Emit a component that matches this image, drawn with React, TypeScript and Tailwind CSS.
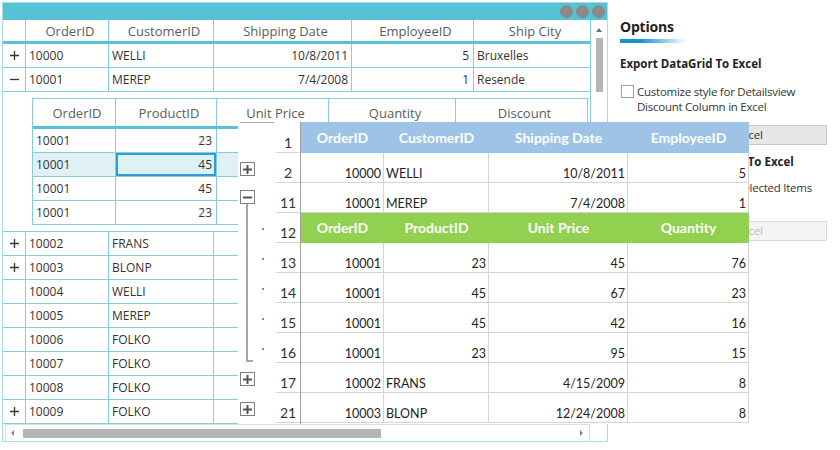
import React from "react";

const LINE = "border-[#84cfdc]";
const XLINE = "border-[#d4d4d4]";

function PlusIcon({ s = 9, w = 1.3, c = "#333" }: { s?: number; w?: number; c?: string }) {
  return (
    <svg width={s} height={s} viewBox={`0 0 ${s} ${s}`}>
      <path d={`M0 ${s / 2}H${s}M${s / 2} 0V${s}`} stroke={c} strokeWidth={w} fill="none" />
    </svg>
  );
}
function MinusIcon({ s = 9, w = 1.3, c = "#333" }: { s?: number; w?: number; c?: string }) {
  return (
    <svg width={s} height={s} viewBox={`0 0 ${s} ${s}`}>
      <path d={`M0 ${s / 2}H${s}`} stroke={c} strokeWidth={w} fill="none" />
    </svg>
  );
}

type Row = { exp?: "+" | "-"; id: string; cust: string; date: string; emp: string; city: string };

function MainRow({ r }: { r: Row }) {
  return (
    <div className={`flex h-[24px] shrink-0 border-b ${LINE} text-[12px] leading-[16px]`}>
      <div className={`w-[23px] border-r ${LINE} flex items-center justify-center`}>
        {r.exp === "+" ? <PlusIcon /> : r.exp === "-" ? <MinusIcon /> : null}
      </div>
      <div className={`w-[83px] border-r ${LINE} flex items-center pl-[3px]`}>{r.id}</div>
      <div className={`w-[105px] border-r ${LINE} flex items-center pl-[3px]`}>{r.cust}</div>
      <div className={`w-[138px] border-r ${LINE} flex items-center justify-end pr-[3px]`}>{r.date}</div>
      <div className={`w-[122px] border-r ${LINE} flex items-center justify-end pr-[4px]`}>{r.emp}</div>
      <div className="w-[116px] flex items-center pl-[3px]">{r.city}</div>
    </div>
  );
}

const topRows: Row[] = [
  { exp: "+", id: "10000", cust: "WELLI", date: "10/8/2011", emp: "5", city: "Bruxelles" },
  { exp: "-", id: "10001", cust: "MEREP", date: "7/4/2008", emp: "1", city: "Resende" },
];
const bottomRows: Row[] = [
  { exp: "+", id: "10002", cust: "FRANS", date: "", emp: "", city: "" },
  { exp: "+", id: "10003", cust: "BLONP", date: "", emp: "", city: "" },
  { id: "10004", cust: "WELLI", date: "", emp: "", city: "" },
  { id: "10005", cust: "MEREP", date: "", emp: "", city: "" },
  { id: "10006", cust: "FOLKO", date: "", emp: "", city: "" },
  { id: "10007", cust: "FOLKO", date: "", emp: "", city: "" },
  { id: "10008", cust: "FOLKO", date: "", emp: "", city: "" },
  { exp: "+", id: "10009", cust: "FOLKO", date: "", emp: "", city: "" },
];

const detailRows = [
  { id: "10001", p: "23" },
  { id: "10001", p: "45" },
  { id: "10001", p: "45" },
  { id: "10001", p: "23" },
];

function DetailGrid() {
  return (
    <div className={`w-[556px] border ${LINE} flex flex-col`}>
      <div className="flex h-[30px] shrink-0 border-b-[3px] border-[#56c2d6] text-[13px] text-[#5c5c5c]">
        <div className={`w-[83px] border-r ${LINE} flex items-center justify-center pl-[6px] pt-[2px]`}>OrderID</div>
        <div className={`w-[101px] border-r ${LINE} flex items-center justify-center pl-[6px] pt-[2px]`}>ProductID</div>
        <div className={`w-[112px] border-r ${LINE} flex items-center justify-center pl-[6px] pt-[2px]`}>Unit Price</div>
        <div className={`w-[127px] border-r ${LINE} flex items-center justify-center pl-[6px] pt-[2px]`}>Quantity</div>
        <div className="w-[131px] flex items-center justify-center pl-[6px] pt-[2px]">Discount</div>
      </div>
      {detailRows.map((r, i) => {
        const sel = i === 1;
        const last = i === 3;
        return (
          <div
            key={i}
            className={`flex shrink-0 text-[12px] leading-[16px] ${last ? "h-[23px]" : `h-[24px] border-b ${LINE}`} ${sel ? "bg-[#dff1f5]" : ""}`}
          >
            <div className={`w-[83px] border-r ${LINE} flex items-center pl-[3px]`}>{r.id}</div>
            <div
              className={`w-[101px] border-r ${LINE} flex items-center justify-end pr-[4px] ${sel ? "shadow-[inset_0_0_0_2px_#2a9fd8]" : ""}`}
            >
              {r.p}
            </div>
            <div className={`w-[112px] border-r ${LINE}`} />
            <div className={`w-[127px] border-r ${LINE}`} />
            <div className="w-[131px]" />
          </div>
        );
      })}
    </div>
  );
}

function MainWindow() {
  const heads = ["", "OrderID", "CustomerID", "Shipping Date", "EmployeeID", "Ship City"];
  const widths = ["w-[23px]", "w-[83px]", "w-[105px]", "w-[138px]", "w-[122px]", "w-[116px]"];
  return (
    <div className="w-[606px] h-[440px] shrink-0 border border-[#a9dbe5] flex flex-col">
      <div className="h-[17px] shrink-0 bg-[#56c2d6] flex items-center justify-end gap-[3px] pr-[2px]">
        <span className="w-[13px] h-[13px] rounded-full bg-[#8a8a8a]" />
        <span className="w-[13px] h-[13px] rounded-full bg-[#8a8a8a]" />
        <span className="w-[13px] h-[13px] rounded-full bg-[#8a8a8a]" />
      </div>
      <div className="flex h-[404px] shrink-0">
        <div className="w-[587px] flex flex-col">
          <div className="flex h-[24px] shrink-0 border-b-[3px] border-[#56c2d6] text-[13px] text-[#5c5c5c]">
            {heads.map((h, i) => (
              <div
                key={i}
                className={`${widths[i]} h-full flex items-center justify-center pl-[6px] pt-[2px] ${i < 5 ? `border-r ${LINE}` : ""}`}
              >
                {h}
              </div>
            ))}
          </div>
          {topRows.map((r, i) => (
            <MainRow key={i} r={r} />
          ))}
          <div className={`h-[140px] shrink-0 border-b ${LINE} pt-[6px] pl-[29px]`}>
            <DetailGrid />
          </div>
          {bottomRows.map((r, i) => (
            <MainRow key={i} r={r} />
          ))}
        </div>
        <div className={`w-[17px] border-l ${LINE} flex flex-col items-center pt-[8px]`}>
          <span className="w-0 h-0 border-l-[3px] border-r-[3px] border-b-[4px] border-l-transparent border-r-transparent border-b-[#707070]" />
          <span className="mt-[6px] w-[7px] h-[54px] bg-[#b5b5b5]" />
        </div>
      </div>
      <div className="h-[17px] shrink-0 flex">
        <div className="ml-[2px] w-[585px] h-full border-t border-l border-r border-[#dedede] flex items-center">
          <span className="ml-[5px] w-0 h-0 border-t-[3px] border-b-[3px] border-r-[3px] border-t-transparent border-b-transparent border-r-[#8a8a8a]" />
          <span className="ml-[9px] w-[358px] h-[9px] bg-[#b5b5b5]" />
          <span className="ml-auto mr-[6px] w-0 h-0 border-t-[3px] border-b-[3px] border-l-[3px] border-t-transparent border-b-transparent border-l-[#8a8a8a]" />
        </div>
      </div>
    </div>
  );
}

function Options() {
  return (
    <div className="ml-[12px] w-[207px] shrink-0 flex flex-col pt-[15px] text-[#333]">
      <div className="text-[14px] leading-[19px] font-bold text-[#222] tracking-[-0.2px]">Options</div>
      <div className="mt-[3px] w-[67px] h-[4px] bg-linear-to-r from-[#1592d8] from-30% to-[#1592d8]/0" />
      <div className="mt-[13px] text-[11.5px] leading-[16px] font-bold text-[#222]">Export DataGrid To Excel</div>
      <div className="mt-[12px] flex">
        <span className="ml-[1px] mt-[1px] w-[13px] h-[13px] shrink-0 border border-[#a0a0a0] bg-white" />
        <div className="ml-[3px] text-[11.5px] leading-[15px] tracking-[-0.25px] whitespace-nowrap">
          Customize style for Detailsview
          <br />
          Discount Column in Excel
        </div>
      </div>
      <div className="mt-[11px] h-[20px] border border-[#c9c9c9] bg-[#e6e6e6] flex items-center justify-center text-[11.5px] leading-[16px] tracking-[-0.2px]">
        Export To Excel
      </div>
      <div className="mt-[9px] text-[11.5px] leading-[16px] font-bold text-[#222]">Export Selected Items To Excel</div>
      <div className="mt-[10px] flex">
        <span className="ml-[1px] mt-[1px] w-[13px] h-[13px] shrink-0 border border-[#a0a0a0] bg-white" />
        <div className="ml-[3px] text-[11.5px] leading-[15px] tracking-[-0.25px] whitespace-nowrap">
          Customize style for Selected Items
          <br />
          in Excel
        </div>
      </div>
      <div className="mt-[11px] h-[20px] border border-[#dadada] bg-[#f4f4f4] flex items-center justify-center text-[11.5px] leading-[16px] tracking-[-0.2px] text-[#bdbdbd]">
        Export To Excel
      </div>
    </div>
  );
}

function BoxBtn({ minus }: { minus?: boolean }) {
  return (
    <span className="ml-[2px] w-[15px] h-[14px] shrink-0 border border-[#7f7f7f] bg-white flex items-center justify-center">
      {minus ? <MinusIcon s={9} w={2} c="#555" /> : <PlusIcon s={9} w={2} c="#555" />}
    </span>
  );
}

function Outline() {
  const dot = <span className="ml-[14px] mt-[15px] w-[2px] h-[2px] bg-[#8a8a8a]" />;
  return (
    <div className="w-[38px] shrink-0 flex flex-col">
      <div className="h-[31px] shrink-0">
        <div className="ml-[2px] w-[34px] border-t border-[#a6a6a6]" />
      </div>
      <div className="h-[30px] shrink-0 pt-[9px] flex items-start">
        <BoxBtn />
      </div>
      <div className="h-[30px] shrink-0 flex flex-col">
        <div className="mt-[7px] flex">
          <BoxBtn minus />
        </div>
        <div className="ml-[8px] w-[2px] flex-1 bg-[#a6a6a6]" />
      </div>
      {[0, 1, 2, 3].map((i) => (
        <div key={i} className="h-[30px] shrink-0 flex">
          <span className="ml-[8px] w-[2px] h-full bg-[#a6a6a6]" />
          {dot}
        </div>
      ))}
      <div className="h-[30px] shrink-0 flex">
        <span className="ml-[8px] w-[7px] h-[29px] border-l-2 border-b-2 border-[#a6a6a6]" />
        <span className="ml-[9px] mt-[15px] w-[2px] h-[2px] bg-[#8a8a8a]" />
      </div>
      <div className="h-[30px] shrink-0 pt-[9px] flex items-start">
        <BoxBtn />
      </div>
      <div className="h-[30px] shrink-0 pt-[9px] flex items-start">
        <BoxBtn />
      </div>
    </div>
  );
}

const rowNums = ["1", "2", "11", "12", "13", "14", "15", "16", "17", "21"];

function RowNums() {
  return (
    <div className="w-[24px] shrink-0 flex flex-col text-[14px] leading-[16px] text-[#333]">
      {rowNums.map((n, i) => (
        <div
          key={n}
          className={`${i === 0 ? "h-[31px]" : "h-[30px]"} shrink-0 border-b ${XLINE} flex items-end justify-center pb-[1px]`}
        >
          {n}
        </div>
      ))}
    </div>
  );
}

type XCell = { t: string; r?: boolean };
const xData: (XCell[] | "green")[] = [
  [{ t: "10000", r: true }, { t: "WELLI" }, { t: "10/8/2011", r: true }, { t: "5", r: true }],
  [{ t: "10001", r: true }, { t: "MEREP" }, { t: "7/4/2008", r: true }, { t: "1", r: true }],
  "green",
  [{ t: "10001", r: true }, { t: "23", r: true }, { t: "45", r: true }, { t: "76", r: true }],
  [{ t: "10001", r: true }, { t: "45", r: true }, { t: "67", r: true }, { t: "23", r: true }],
  [{ t: "10001", r: true }, { t: "45", r: true }, { t: "42", r: true }, { t: "16", r: true }],
  [{ t: "10001", r: true }, { t: "23", r: true }, { t: "95", r: true }, { t: "15", r: true }],
  [{ t: "10002", r: true }, { t: "FRANS" }, { t: "4/15/2009", r: true }, { t: "8", r: true }],
  [{ t: "10003", r: true }, { t: "BLONP" }, { t: "12/24/2008", r: true }, { t: "8", r: true }],
];
const xw = ["w-[83px]", "w-[105px]", "w-[139px]", "w-[121px]"];

function Sheet() {
  return (
    <div className="w-[449px] shrink-0 border-l border-[#a0a0a0] flex flex-col">
      <div className="h-[31px] shrink-0 bg-[#9dc3e6] flex text-white font-bold text-[14px] leading-[16px]">
        {["OrderID", "CustomerID", "Shipping Date", "EmployeeID"].map((h, i) => (
          <div key={h} className={`${xw[i]} flex items-center justify-center`}>
            {h}
          </div>
        ))}
      </div>
      {xData.map((row, ri) =>
        row === "green" ? (
          <div key={ri} className="h-[30px] shrink-0 bg-[#92d050] flex text-white font-bold text-[14px] leading-[16px]">
            {["OrderID", "ProductID", "Unit Price", "Quantity"].map((h, i) => (
              <div key={h} className={`${xw[i]} flex items-center justify-center`}>
                {h}
              </div>
            ))}
          </div>
        ) : (
          <div key={ri} className={`h-[30px] shrink-0 border-b ${XLINE} flex text-[12.5px] leading-[15px] text-[#1e1e1e]`}>
            {row.map((c, i) => (
              <div
                key={i}
                className={`${xw[i]} border-r ${XLINE} flex items-end pb-[1px] ${c.r ? "justify-end pr-[2px]" : "pl-[2px]"}`}
              >
                {c.t}
              </div>
            ))}
          </div>
        )
      )}
    </div>
  );
}

function ExcelOverlay() {
  return (
    <div className="absolute left-[238px] top-[122px] w-[511px] h-[302px] bg-white flex font-['Lato','Open_Sans',sans-serif]">
      <Outline />
      <RowNums />
      <Sheet />
    </div>
  );
}

export default function App() {
  return (
    <div className="relative w-[840px] h-[450px] bg-white overflow-hidden font-['Open_Sans','Noto_Sans',sans-serif] text-[#333]">
      <div className="flex pt-[2px] pl-[2px]">
        <MainWindow />
        <Options />
      </div>
      <ExcelOverlay />
    </div>
  );
}
